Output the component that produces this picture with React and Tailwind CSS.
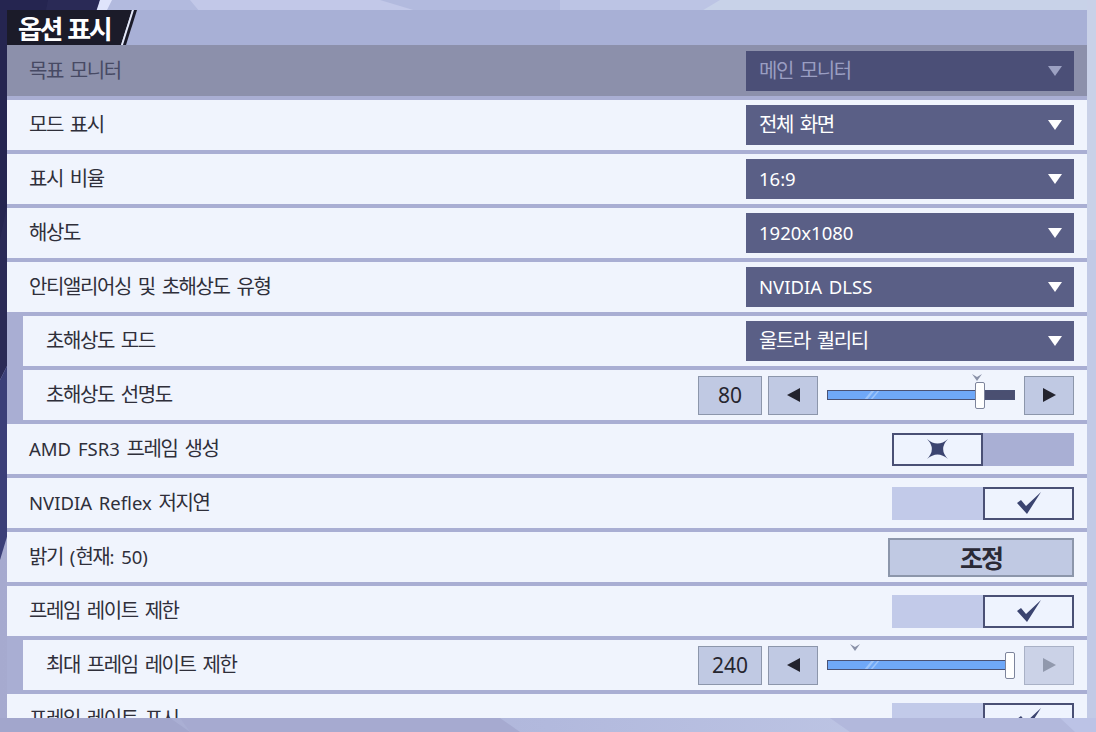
import React from "react";

const FONT = "font-['Noto_Sans','Noto_Sans_CJK_KR',sans-serif]";

function K({ text, hangul = "text-[20px] tracking-[-1.4px]" }) {
  const parts = text.split(/([\uAC00-\uD7A3]+)/);
  return (
    <>
      {parts.map((p, i) =>
        /[\uAC00-\uD7A3]/.test(p) ? (
          <span key={i} className={hangul}>
            {p}
          </span>
        ) : (
          <span key={i}>{p}</span>
        )
      )}
    </>
  );
}

function Tri({ color = "#ffffff" }) {
  return (
    <svg width="14" height="10" viewBox="0 0 14 10">
      <polygon points="0,0 14,0 7,10" fill={color} />
    </svg>
  );
}

function Dropdown({ value, disabled }) {
  return (
    <div
      className={`w-[328px] h-[40px] flex items-center justify-between pl-[13px] pr-[12px] ${
        disabled ? "bg-[#4b4f77]" : "bg-[#5a5f86]"
      }`}
    >
      <span
        className={`text-[18.5px] leading-none [word-spacing:2px] ${
          disabled ? "text-[#9a9ec2]" : "text-white"
        }`}
      >
        <K text={value} />
      </span>
      <Tri color={disabled ? "#9ca1c2" : "#ffffff"} />
    </div>
  );
}

function ArrowBtn({ dir, disabled }) {
  const pts = dir === "left" ? "0,7 13,0 13,14" : "0,0 13,7 0,14";
  return (
    <div
      className={`w-[50px] h-[39px] flex items-center justify-center border-[1.5px] ${
        disabled ? "bg-[#cbd2e7] border-[#a9b1c6]" : "bg-[#c0c9e3] border-[#8c96ab]"
      }`}
    >
      <svg width="13" height="14" viewBox="0 0 13 14">
        <polygon points={pts} fill={disabled ? "#9199ad" : "#23232e"} />
      </svg>
    </div>
  );
}

function Slider({ value, pct, marker, rightDisabled }) {
  const thumbLeft = (188 - 10) * pct;
  return (
    <div className="flex items-center">
      <div className="w-[64px] h-[39px] flex items-center justify-center bg-[#c0c9e3] border-[1.5px] border-[#8c96ab] text-[21px] text-[#26262f] leading-none">
        {value}
      </div>
      <div className="ml-[6px]">
        <ArrowBtn dir="left" />
      </div>
      <div className="relative ml-[9px] w-[188px] h-[39px] flex items-center">
        <div className="relative w-full h-[10px] bg-[#4a4f71] border border-[#4a5275] overflow-hidden">
          <div
            className="h-full bg-[#6fa8f8]"
            style={{ width: `${thumbLeft + 4}px` }}
          />
          <div className="absolute left-[40px] top-0 h-full w-[3px] bg-[#9cc4fb] skew-x-[-40deg]" />
          <div className="absolute left-[46px] top-0 h-full w-[2px] bg-[#9cc4fb] skew-x-[-40deg]" />
        </div>
        <div
          className="absolute top-[6px] w-[10px] h-[27px] bg-white border border-[#7d849c] rounded-[2px]"
          style={{ left: `${thumbLeft}px` }}
        />
        <svg
          className="absolute top-[-2px]"
          style={{ left: `${marker}px` }}
          width="10"
          height="7"
          viewBox="0 0 10 7"
        >
          <polygon points="0,0 5,3 10,0 5,7" fill="#8a91a8" />
        </svg>
      </div>
      <div className="ml-[9px]">
        <ArrowBtn dir="right" disabled={rightDisabled} />
      </div>
    </div>
  );
}

function XIcon() {
  return (
    <svg width="21" height="20" viewBox="0 0 21 20">
      <path
        d="M0 0 Q10.5 9.2 21 0 Q11.3 10 21 20 Q10.5 10.8 0 20 Q9.7 10 0 0 Z"
        fill="#3b4470"
      />
    </svg>
  );
}

function Check() {
  return (
    <svg width="24" height="22" viewBox="0 0 24 22">
      <polygon points="0,11 4,8 9,14 24,0 10,22" fill="#3b4470" />
    </svg>
  );
}

function Toggle({ on }) {
  if (on) {
    return (
      <div className="flex w-[182px] h-[33px]">
        <div className="w-[91px] h-full bg-[#c2cae9]" />
        <div className="w-[91px] h-full bg-[#eef3fe] border-2 border-[#4a5075] flex items-center justify-center">
          <Check />
        </div>
      </div>
    );
  }
  return (
    <div className="flex w-[182px] h-[33px]">
      <div className="w-[91px] h-full bg-[#eef3fe] border-2 border-[#4a5075] flex items-center justify-center">
        <XIcon />
      </div>
      <div className="w-[91px] h-full bg-[#a9afd4]" />
    </div>
  );
}

function AdjustBtn() {
  return (
    <div className="w-[186px] h-[39px] bg-[#c0c9e3] border-2 border-[#8c96ab] flex items-center justify-center text-[25px] font-bold text-[#2a2a36] leading-none tracking-[-2px] font-['Noto_Sans_CJK_KR',sans-serif]">
      조정
    </div>
  );
}

function Row({ label, children, sub }) {
  const inner = (
    <div
      className={`flex-1 h-[50px] flex items-center justify-between bg-[#f0f4fd] pr-[13px] ${
        sub ? "pl-[23px]" : "pl-[22px]"
      }`}
    >
      <span className="text-[18.5px] text-[#2f2f3a] leading-none [word-spacing:2px]">
        <K text={label} />
      </span>
      {children}
    </div>
  );
  if (sub) {
    return (
      <div className="flex h-[50px] bg-[#a9aed3] pl-[16px] shrink-0">{inner}</div>
    );
  }
  return <div className="flex h-[50px] shrink-0">{inner}</div>;
}

export default function App() {
  return (
    <div
      className={`relative w-[1096px] h-[732px] overflow-hidden bg-gradient-to-r from-[#a6aacf] via-[#b2b9dd] to-[#c4cce8] ${FONT}`}
    >
      <svg
        className="absolute inset-0"
        width="1096"
        height="732"
        viewBox="0 0 1096 732"
      >
        <rect x="0" y="0" width="1096" height="12" fill="#b2bade" />
        <polygon points="190,0 380,0 420,12 200,12" fill="#c2c8e8" />
        <polygon points="560,0 740,0 760,12 560,12" fill="#bcc4e4" />
        <polygon points="720,0 1096,0 1096,12 700,12" fill="#c8d2e8" />
        <polygon points="0,0 100,0 40,300 0,380" fill="#2a2a56" />
        <polygon points="0,0 48,0 0,240" fill="#252550" />
        <polygon points="100,0 112,0 106,12 96,12" fill="#dfe4fb" />
        <polygon points="0,380 40,300 12,520 0,560" fill="#3b3f78" />
        <rect x="1087" y="0" width="9" height="732" fill="#c9d1e8" />
        <rect x="1087" y="240" width="9" height="480" fill="#c2cae6" />
        <polygon points="0,718 170,718 190,732 0,732" fill="#a2a6cc" />
        <polygon points="180,718 500,718 520,732 190,732" fill="#a6aad0" />
        <polygon points="830,718 1090,718 1096,732 850,732" fill="#b2b8dc" />
        <polygon points="1060,718 1096,718 1096,732 1075,732" fill="#bcc3e6" />
      </svg>

      <div className="relative ml-[7px] mt-[10px] w-[1080px] h-[708px] overflow-hidden flex flex-col bg-[#a9aed3]">
        <div className="h-[35px] shrink-0 bg-[#a8b0d6] flex items-stretch">
          <div className="h-full bg-[#1b1b29] pl-[11px] pr-[3px] flex items-center">
            <span className="text-[26px] font-bold text-white leading-none tracking-[-2.5px] [word-spacing:3px] font-['Noto_Sans_CJK_KR',sans-serif]">
              옵션 표시
            </span>
          </div>
          <svg width="30" height="35" viewBox="0 0 30 35">
            <polygon points="0,0 19,0 8,35 0,35" fill="#1b1b29" />
            <polygon points="19,0 21,0 10,35 8,35" fill="#e4e8f6" />
            <polygon points="21,0 24,0 13,35 10,35" fill="#1b1b29" />
          </svg>
        </div>

        <div className="h-[51px] shrink-0 bg-[#8c90ab] flex items-center justify-between pl-[22px] pr-[13px]">
          <span className="text-[18.5px] text-[#474a64] leading-none [word-spacing:2px]">
            <K text="목표 모니터" />
          </span>
          <Dropdown value="메인 모니터" disabled />
        </div>

        <div className="flex flex-col gap-[4px] mt-[4px]">
          <Row label="모드 표시">
            <Dropdown value="전체 화면" />
          </Row>
          <Row label="표시 비율">
            <Dropdown value="16:9" />
          </Row>
          <Row label="해상도">
            <Dropdown value="1920x1080" />
          </Row>
          <Row label="안티앨리어싱 및 초해상도 유형">
            <Dropdown value="NVIDIA DLSS" />
          </Row>
          <Row label="초해상도 모드" sub>
            <Dropdown value="울트라 퀄리티" />
          </Row>
          <Row label="초해상도 선명도" sub>
            <Slider value="80" pct={0.83} marker={145} />
          </Row>
          <Row label="AMD FSR3 프레임 생성">
            <Toggle on={false} />
          </Row>
          <Row label="NVIDIA Reflex 저지연">
            <Toggle on />
          </Row>
          <Row label="밝기 (현재: 50)">
            <AdjustBtn />
          </Row>
          <Row label="프레임 레이트 제한">
            <Toggle on />
          </Row>
          <Row label="최대 프레임 레이트 제한" sub>
            <Slider value="240" pct={1} marker={23} rightDisabled />
          </Row>
          <Row label="프레임 레이트 표시">
            <Toggle on />
          </Row>
        </div>
      </div>
    </div>
  );
}
